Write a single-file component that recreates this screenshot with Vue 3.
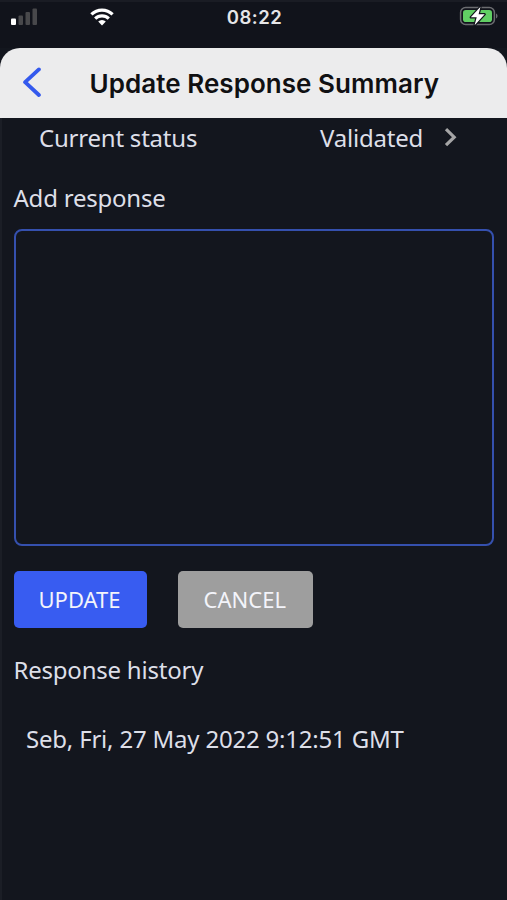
<script setup>
import { ref } from 'vue'

const status = ref('Validated')
const response = ref('')
const history = ref([{ id: 1, user: 'Seb', date: 'Fri, 27 May 2022 9:12:51 GMT' }])

function updateHandler() {
  if (!response.value) return
  history.value.push({
    id: history.value.length + 1,
    user: 'Seb',
    date: new Date().toUTCString()
  })
  response.value = ''
}

function cancelHandler() {
  response.value = ''
}
</script>

<template>
  <div class="screen">
    <!-- status bar -->
    <div class="status-bar">
      <div class="side">
        <svg class="signal" width="28" height="18" viewBox="0 0 28 18">
          <rect x="1" y="10.5" width="5" height="6.5" rx="1" fill="#fff" />
          <rect x="8.5" y="7.5" width="4.5" height="9.5" rx="1" fill="#48484b" />
          <rect x="15.5" y="4" width="4.5" height="13" rx="1" fill="#48484b" />
          <rect x="22.5" y="0.5" width="4.5" height="16.5" rx="1" fill="#48484b" />
        </svg>
        <svg class="wifi" width="24" height="18" viewBox="0 0 24 18">
          <g fill="none" stroke="#fff" stroke-width="3.2">
            <path d="M1.4 6.4A15.2 15.2 0 0 1 22.6 6.4" />
            <path d="M5.2 10.7A9.8 9.8 0 0 1 18.8 10.7" />
          </g>
          <path d="M12 17.4L8.2 13.6A5.4 5.4 0 0 1 15.8 13.6Z" fill="#fff" />
        </svg>
      </div>
      <div class="time">08:22</div>
      <div class="side right">
        <svg width="40" height="22" viewBox="0 0 40 22">
          <rect x="1.6" y="2.6" width="33.8" height="16.8" rx="5" fill="none" stroke="#6b6c70" stroke-width="1.5" />
          <rect x="4" y="5" width="29" height="12" rx="2.8" fill="#61cf64" />
          <path d="M37 8.5C39 9.3 39 12.7 37 13.5Z" fill="#6b6c70" />
          <path
            d="M21.5 1.8L11.8 12.3H17.7L15.6 20.2L25.7 9.3H19.6Z"
            fill="#fff"
            stroke="#11131b"
            stroke-width="2.4"
            stroke-linejoin="round"
            paint-order="stroke"
          />
        </svg>
      </div>
    </div>

    <header>
      <svg class="back" width="24" height="32" viewBox="0 0 24 32">
        <path d="M18.9 2.4L5.1 15.2L18.9 28" fill="none" stroke="#3459ed" stroke-width="3.8" stroke-linecap="round" stroke-linejoin="round" />
      </svg>
      <h1>Update Response Summary</h1>
    </header>

    <main>
      <div class="status-row">
        <span class="label">Current status</span>
        <span class="value">{{ status }}</span>
        <svg class="chevron" width="14" height="20" viewBox="0 0 14 20">
          <path d="M2 2.2L10.2 10.2L2 18.2" fill="none" stroke="#a5a5a6" stroke-width="3.2" />
        </svg>
      </div>

      <label class="title" for="response">Add response</label>
      <textarea id="response" v-model="response"></textarea>

      <div class="buttons">
        <button class="btn update" @click="updateHandler">UPDATE</button>
        <button class="btn cancel" @click="cancelHandler">CANCEL</button>
      </div>

      <h2 class="title">Response history</h2>
      <ul>
        <li v-for="item in history" :key="item.id">{{ item.user }}, {{ item.date }}</li>
      </ul>
    </main>
  </div>
</template>

<style>
body {
  background: #13161e;
}
</style>

<style scoped>
.screen {
  box-sizing: border-box;
  display: flex;
  flex-direction: column;
  height: 900px;
  overflow: hidden;
  background: #13161e;
  color: #dddfe8;
  font-family: 'Noto Sans', sans-serif;
  font-size: 24px;
  letter-spacing: -0.22px;
}

.status-bar {
  box-sizing: border-box;
  display: flex;
  align-items: flex-start;
  height: 48px;
  padding: 0 8px 0 10px;
  border-top: 2px solid #1a1c24;
  background: #11131b;
}

.side {
  display: flex;
  flex: 1;
  padding-top: 6px;
}

.wifi {
  margin-left: 52px;
}

.right {
  justify-content: flex-end;
  padding-top: 3px;
}

.time {
  padding-top: 4px;
  color: #e6e6e8;
  font-family: Inter, sans-serif;
  font-size: 18.5px;
  font-weight: 600;
  line-height: 22px;
  letter-spacing: 0.5px;
}

header {
  box-sizing: border-box;
  display: flex;
  align-items: center;
  height: 70px;
  padding-left: 20px;
  border-radius: 20px 20px 0 0;
  background: #ececed;
}

.back {
  flex: none;
}

h1 {
  margin: 1px 0 0 45.5px;
  color: #101012;
  font-family: Inter, sans-serif;
  font-size: 26px;
  font-weight: 600;
  line-height: 32px;
  letter-spacing: 0.05px;
  white-space: nowrap;
}

main {
  display: flex;
  flex: 1;
  flex-direction: column;
  padding: 0 13px 0 11.5px;
  border-left: 2px solid #1b1e26;
}

.status-row {
  display: flex;
  align-items: center;
  height: 38px;
  padding: 0 36px 0 25.5px;
}

.value {
  margin-left: auto;
}

.chevron {
  margin-left: 21px;
}

.title {
  margin: 0;
  font-size: 24px;
  font-weight: 400;
  line-height: 34px;
}

label.title {
  margin-top: 25px;
}

textarea {
  box-sizing: border-box;
  width: 100%;
  height: 317px;
  margin: 14px 0 0;
  padding: 12px;
  border: 2px solid #3550ae;
  border-radius: 8px;
  outline: none;
  background: transparent;
  color: inherit;
  font: inherit;
  resize: none;
}

.buttons {
  display: flex;
  gap: 31.5px;
  margin-top: 25px;
}

.btn {
  height: 57px;
  padding: 0 1px 2px 0;
  border: 0;
  border-radius: 5px;
  color: #f3f4fa;
  font-family: inherit;
  font-size: 22px;
  letter-spacing: 0;
}

.update {
  width: 133px;
  background: #385cf1;
}

.cancel {
  width: 134.5px;
  background: #9e9e9e;
}

h2.title {
  margin-top: 25px;
}

ul {
  margin: 35px 0 0;
  padding: 0 0 0 12.5px;
  list-style: none;
}

li {
  line-height: 34px;
  letter-spacing: -0.2px;
}
</style>
